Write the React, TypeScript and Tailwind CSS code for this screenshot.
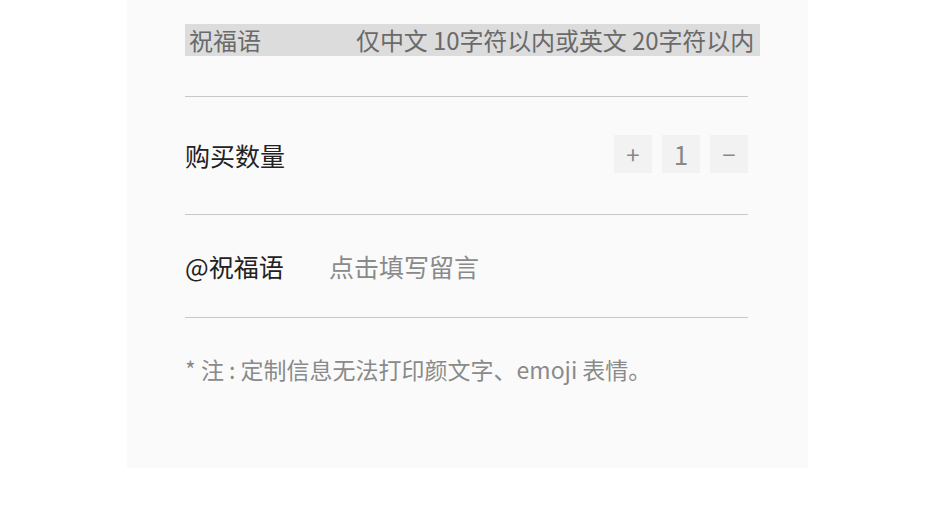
export default function App() {
  return (
    <div
      className="w-[934px] h-[520px] bg-white"
      style={{ fontFamily: '"Noto Sans CJK SC", "Noto Sans", sans-serif' }}
    >
      <div className="ml-[127px] w-[681px] h-[468px] bg-[#fafafa] pl-[58px] pt-[24px]">
        {/* 祝福语 输入 */}
        <div className="w-[575px] h-[32px] bg-[#dcdcdc] flex items-center pl-[4px] text-[24px] leading-none text-[#6a6a6a]">
          <span className="w-[167px]">祝福语</span>
          <span className="tracking-[-0.1px]">仅中文 10字符以内或英文 20字符以内</span>
        </div>

        <div className="w-[563px] mt-[40px] border-t border-[#c8c8c8]" />

        {/* 购买数量 */}
        <div className="w-[563px] h-[117px] flex items-center justify-between">
          <span className="text-[25px] leading-none text-[#222]">购买数量</span>
          <div className="flex gap-[10px] -mt-[3px]">
            <button className="w-[38px] h-[38px] bg-[#f2f2f2] text-[#888] text-[24px] leading-none flex items-center justify-center">
              +
            </button>
            <div className="w-[38px] h-[38px] bg-[#f2f2f2] text-[#888] text-[26px] leading-none flex items-center justify-center">
              1
            </div>
            <button className="w-[38px] h-[38px] bg-[#f2f2f2] text-[#888] text-[24px] leading-none flex items-center justify-center">
              −
            </button>
          </div>
        </div>

        <div className="w-[563px] border-t border-[#c8c8c8]" />

        {/* @祝福语 */}
        <div className="w-[563px] h-[102px] flex items-center">
          <span className="w-[144px] text-[25px] leading-none text-[#222]">@祝福语</span>
          <span className="text-[25px] leading-none text-[#8a8a8a]">点击填写留言</span>
        </div>

        <div className="w-[563px] border-t border-[#c8c8c8]" />

        <p className="mt-[37px] text-[23px] leading-[28px] text-[#8a8a8a]">
          * 注 : 定制信息无法打印颜文字、emoji 表情。
        </p>
      </div>
    </div>
  );
}
